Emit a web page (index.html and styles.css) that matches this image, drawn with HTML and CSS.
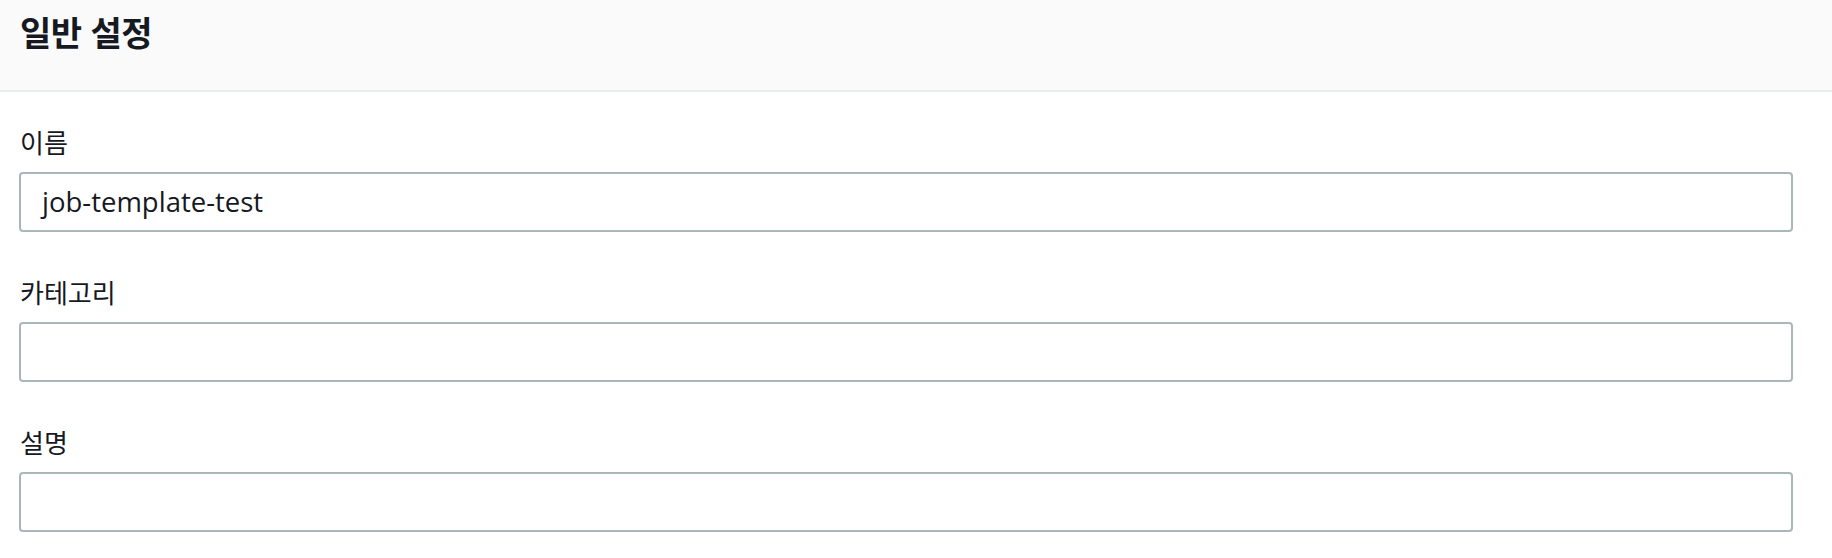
FILE: index.html
```html
<!DOCTYPE html>
<html lang="ko">
<head>
<meta charset="utf-8">
<link rel="stylesheet" href="styles.css">
</head>
<body>
<div class="panel">
  <div class="panel-header">
    <h2 class="panel-title">일반 설정</h2>
  </div>
  <div class="panel-body">
    <div class="field">
      <label class="field-label">이름</label>
      <div class="field-input">job-template-test</div>
    </div>
    <div class="field">
      <label class="field-label">카테고리</label>
      <div class="field-input"></div>
    </div>
    <div class="field">
      <label class="field-label">설명</label>
      <div class="field-input"></div>
    </div>
  </div>
</div>
</body>
</html>
```
FILE: styles.css
```css
html, body {
  margin: 0;
  padding: 0;
  background: #ffffff;
}
body {
  font-family: "Noto Sans", "Noto Sans CJK KR", sans-serif;
  color: #16191f;
}
.panel-header {
  height: 90px;
  background: #fafafa;
  border-bottom: 2px solid #eaeded;
  box-sizing: content-box;
  padding: 0 20px;
  display: flex;
  align-items: flex-start;
}
.panel-title {
  margin: 0;
  margin-top: 10px;
  font-family: "Noto Sans CJK KR", sans-serif;
  font-size: 34px;
  font-weight: 700;
  line-height: 44px;
  letter-spacing: -0.5px;
}
.panel-body {
  padding: 32px 39px 0 19px;
  display: flex;
  flex-direction: column;
  gap: 42px;
}
.field {
  display: flex;
  flex-direction: column;
  gap: 12px;
}
.field-label {
  font-family: "Noto Sans CJK KR", sans-serif;
  font-size: 26px;
  line-height: 36px;
  padding-left: 1px;
}
.field-input {
  height: 56px;
  border: 2px solid #aab7b8;
  border-radius: 4px;
  padding: 0 21px;
  font-family: "Open Sans", "Noto Sans", sans-serif;
  font-size: 27.5px;
  line-height: 56px;
  color: #16191f;
}
```
